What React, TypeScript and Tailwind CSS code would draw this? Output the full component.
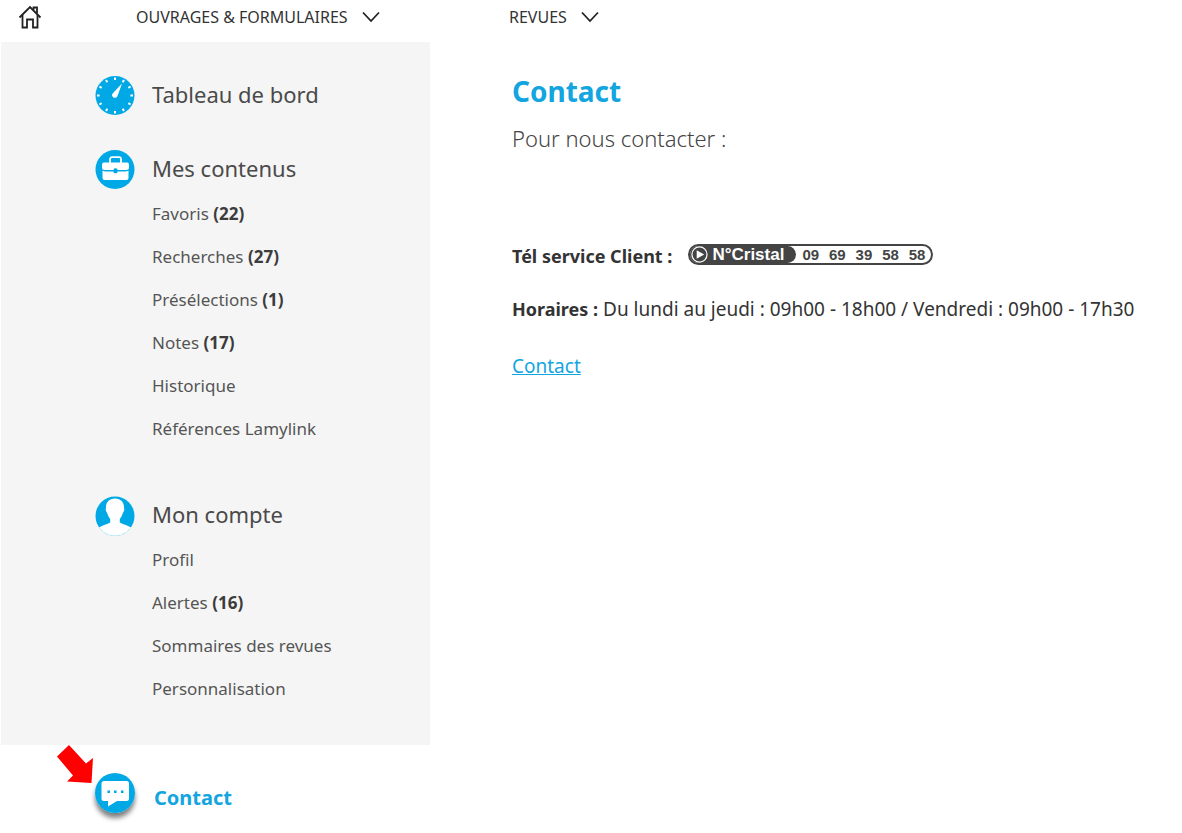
import React from 'react';

interface MenuEntry {
  label: string;
  count?: number;
}

const contenus: MenuEntry[] = [
  { label: 'Favoris', count: 22 },
  { label: 'Recherches', count: 27 },
  { label: 'Présélections', count: 1 },
  { label: 'Notes', count: 17 },
  { label: 'Historique' },
  { label: 'Références Lamylink' },
];

const compte: MenuEntry[] = [
  { label: 'Profil' },
  { label: 'Alertes', count: 16 },
  { label: 'Sommaires des revues' },
  { label: 'Personnalisation' },
];

function HomeIcon() {
  return (
    <svg viewBox="0 0 24 24" className="h-6 w-6" fill="none" stroke="#222" strokeWidth="1.8">
      <path d="M1.500 12.500 12 2l10.500 10.500" />
      <path d="M4.500 10v12.500h4.500v-8h6v8h4.500V10" />
      <path d="M15.500 5V2.500h3.500v6" />
    </svg>
  );
}

function Chevron() {
  return (
    <svg viewBox="0 0 18 12" className="h-3 w-[18px]" fill="none" stroke="#222" strokeWidth="1.8">
      <path d="M1 1.500 9 10l8-8.500" />
    </svg>
  );
}

function GaugeIcon() {
  const ticks = [0, 30, 60, 90, 120, 150, 180, 210, 240, 270, 300, 330];
  return (
    <svg viewBox="0 0 40 40" className="h-10 w-10 shrink-0">
      <circle cx="20" cy="19.500" r="19.500" fill="#00a9e5" />
      {ticks.map((t) => (
        <path key={t} d="M20 1.500v2.600" stroke="#fff" strokeWidth="2" transform={`rotate(${t} 20 19.500)`} />
      ))}
      <path d="M27 7.500 17.600 17.400a2.800 2.800 0 1 0 4.900 2.600z" fill="#fff" />
    </svg>
  );
}

function BriefcaseIcon() {
  return (
    <svg viewBox="0 0 40 40" className="h-10 w-10 shrink-0">
      <circle cx="20" cy="19.500" r="19.500" fill="#00a9e5" />
      <path d="M15 13V9.200a2 2 0 0 1 2-2h7a2 2 0 0 1 2 2V13" fill="none" stroke="#fff" strokeWidth="1.800" />
      <path d="M9 12.500h23a2 2 0 0 1 2 2v3q0 2.500-3 2.500H10q-3 0-3-2.500v-3a2 2 0 0 1 2-2z" fill="#fff" />
      <path d="M7.500 20.600q1.500 1 3.500 1h19q2 0 3.500-1V28a2 2 0 0 1-2 2h-22a2 2 0 0 1-2-2z" fill="#fff" />
      <rect x="18.500" y="18.200" width="4" height="5" rx="1.500" fill="#00a9e5" />
    </svg>
  );
}

function UserIcon() {
  return (
    <svg viewBox="0 0 40 40" className="h-10 w-10 shrink-0">
      <circle cx="20" cy="20" r="19.500" fill="#00a9e5" />
      <path
        d="M20 2.500c-6 0-9.300 4-9 9.500-.8 1.500.2 4 1.200 5 .8 3 1.800 4.500 3 6v3.500c-3 2-7.500 2.500-11.200 5C8 37.500 14 39.800 20 39.800s12-2.300 16-8.300c-3.700-2.500-8.200-3-11.200-5V23c1.200-1.500 2.200-3 3-6 1-1 2-3.500 1.200-5 .3-5.500-3-9.500-9-9.500z"
        fill="#fff"
      />
      <path d="M5 32.500a19 19 0 0 0 30 0" fill="none" stroke="#b5e4f7" strokeWidth="1" strokeDasharray="5 1" />
    </svg>
  );
}

function ChatIcon() {
  return (
    <svg viewBox="0 0 40 40" className="h-10 w-10">
      <circle cx="20" cy="20" r="20" fill="#00a9e5" />
      <path d="M9 8h22.500a2.500 2.500 0 0 1 2.500 2.500v15a2.500 2.500 0 0 1-2.500 2.500H22l-9 5.500V28H9a2.500 2.500 0 0 1-2.500-2.500v-15A2.500 2.500 0 0 1 9 8z" fill="#fff" />
      <path d="M12.500 17.500h2.500v2.500h-2.500zM19 17.500h2.500v2.500H19zM26 17.500h2.500v2.500H26z" fill="#00a9e5" />
    </svg>
  );
}

function MenuList({ entries }: { entries: MenuEntry[] }) {
  return (
    <ul className="mt-0.5 pl-[57px] text-[17px] text-[#555]">
      {entries.map((e) => (
        <li key={e.label} className="flex h-[43px] items-center">
          <a href="#">
            {e.label}
            {e.count !== undefined && <b className="text-[#3c3c3c]"> ({e.count})</b>}
          </a>
        </li>
      ))}
    </ul>
  );
}

function SectionTitle({ icon, label }: { icon: React.ReactNode; label: string }) {
  return (
    <a href="#" className="flex h-10 items-start gap-[17px] text-[22px] text-[#4a4a4a]">
      {icon}
      <span className="leading-9">{label}</span>
    </a>
  );
}

export default function App() {
  return (
    <div className="min-h-screen bg-white font-['Noto_Sans',sans-serif]">
      <header className="flex h-[42px] items-center pb-2 text-base text-[#333]">
        <a href="#" aria-label="Accueil" className="ml-[18px] w-[118px]">
          <HomeIcon />
        </a>
        <button type="button" className="flex w-[373px] items-center gap-3.5">
          OUVRAGES &amp; FORMULAIRES
          <Chevron />
        </button>
        <button type="button" className="flex items-center gap-3.5">
          REVUES
          <Chevron />
        </button>
      </header>

      <div className="grid grid-cols-[430px_1fr]">
        <aside>
          <nav className="ml-px bg-[#f5f5f5] pt-[34px] pb-[35px] pl-[94px]">
            <SectionTitle icon={<GaugeIcon />} label="Tableau de bord" />
            <div className="mt-[34px]">
              <SectionTitle icon={<BriefcaseIcon />} label="Mes contenus" />
              <MenuList entries={contenus} />
            </div>
            <div className="mt-[46px]">
              <SectionTitle icon={<UserIcon />} label="Mon compte" />
              <MenuList entries={compte} />
            </div>
          </nav>

          <div className="relative pt-7 pl-[95px]">
            <a href="#" className="flex items-center gap-[19px] text-xl font-bold text-[#12a5e0]">
              <span className="rounded-full shadow-[0_5px_5px_rgba(0,0,0,0.5)]">
                <ChatIcon />
              </span>
              <span className="pt-2.5">Contact</span>
            </a>
            {/* Pointer over the contact entry */}
            <svg viewBox="0 0 37 39" className="absolute top-0 left-[57px] h-[39px] w-[37px]">
              <path d="M12 0 29 18.500 36 13l-1.500 25L10 36.500l6-6L0 11.500z" fill="#f00" />
            </svg>
          </div>
        </aside>

        <main className="pt-7 pl-[82px] text-[#333]">
          <h1 className="text-[28px] leading-[42px] font-bold text-[#12a5e0]">Contact</h1>
          <p className="mt-2 text-[22px] leading-9 font-light text-[#444]">Pour nous contacter :</p>

          <div className="mt-[84px] flex items-center gap-4 text-lg leading-8">
            <b>Tél service Client :</b>
            <span className="mb-1 flex h-[21px] w-[245px] items-center overflow-hidden rounded-full border-2 border-[#444] bg-white font-['Liberation_Sans',sans-serif] leading-none font-bold">
              <span className="flex h-full w-[106px] items-center gap-1 rounded-r-full bg-[#444] pl-px text-[17px] text-white">
                <svg viewBox="0 0 18 18" className="h-[17px] w-[17px]">
                  <circle cx="9" cy="9" r="8" fill="none" stroke="#fff" strokeWidth="1.300" />
                  <path d="M6 4.500v9l8-4.500z" fill="#fff" />
                </svg>
                N°Cristal
              </span>
              <span className="flex grow justify-between pr-1.5 pl-1.5 text-[15px] text-[#444]">
                {['09', '69', '39', '58', '58'].map((n, i) => (
                  <span key={i}>{n}</span>
                ))}
              </span>
            </span>
          </div>

          <p className="mt-[21px] text-[19px] leading-8">
            <b className="text-lg">Horaires :</b> Du lundi au jeudi : 09h00 - 18h00 / Vendredi : 09h00 - 17h30
          </p>
          <p className="mt-[25px] text-[19px] leading-8">
            <a href="#" className="text-[#12a5e0] underline">Contact</a>
          </p>
        </main>
      </div>
    </div>
  );
}
